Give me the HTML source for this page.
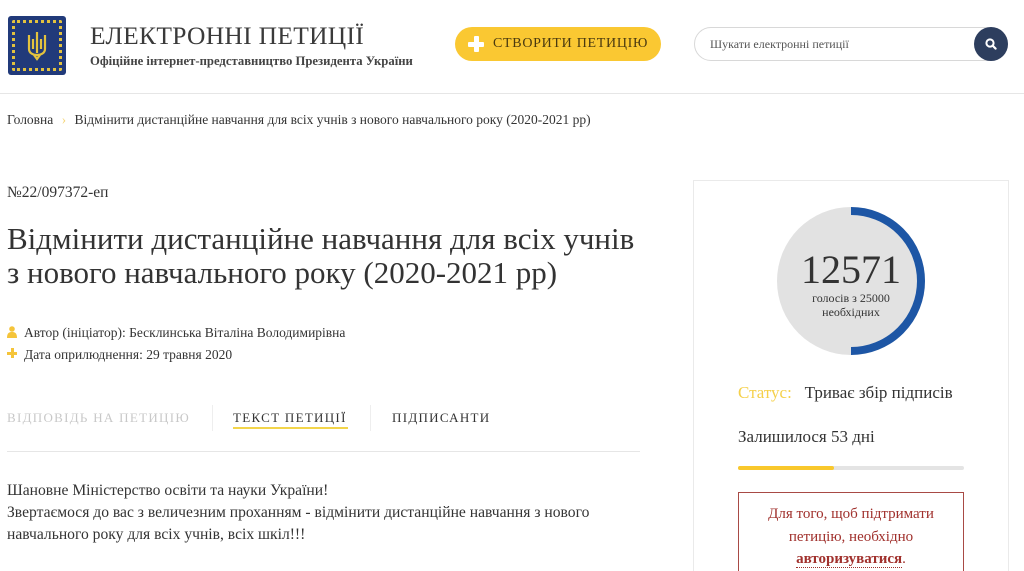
<!DOCTYPE html>
<html><head><meta charset="utf-8"><style>
*{margin:0;padding:0;box-sizing:border-box}
html,body{width:1024px;height:571px;overflow:hidden}
body{background:#fff;font-family:"Liberation Serif","DejaVu Serif",serif;color:#333;position:relative}
.a{position:absolute;white-space:nowrap}
</style></head><body>
<!-- logo -->
<div class="a" style="left:8px;top:16px;width:58px;height:59px;background:#213a7a;border-radius:3px"></div>
<div class="a" style="left:12px;top:20px;width:50px;height:51px;border:3px dotted #e3c23e;border-radius:2px"></div>
<svg class="a" style="left:25px;top:31px" width="24" height="30" viewBox="0 0 24 30"><path d="M12 1v21M4 4v14c0 4 4 6 8 6s8-2 8-6V4M8 8v10M16 8v10M9 24l3 4 3-4" stroke="#e3c23e" stroke-width="2.2" fill="none"/></svg>
<div class="a" style="left:90px;top:21px;font-size:25.5px;color:#3a3a3a;letter-spacing:0.3px">ЕЛЕКТРОННІ ПЕТИЦІЇ</div>
<div class="a" style="left:90px;top:54px;font-size:12.7px;font-weight:bold;color:#444">Офіційне інтернет-представництво Президента України</div>
<!-- button -->
<div class="a" style="left:455px;top:27px;width:206px;height:34px;border-radius:17px;background:#fac832"></div>
<div class="a" style="left:468px;top:36px;width:16px;height:16px">
<div class="a" style="left:6px;top:0;width:5px;height:16px;background:#fff;border-radius:1px"></div>
<div class="a" style="left:0;top:6px;width:16px;height:5px;background:#fff;border-radius:1px"></div></div>
<div class="a" style="left:493px;top:36px;font-size:14px;color:#4a3a10;letter-spacing:0.7px">СТВОРИТИ ПЕТИЦІЮ</div>
<!-- search -->
<div class="a" style="left:694px;top:27px;width:314px;height:34px;border:1px solid #d8d8d8;border-radius:17px"></div>
<div class="a" style="left:710px;top:37px;font-size:12px;color:#555">Шукати електронні петиції</div>
<div class="a" style="left:974px;top:27px;width:34px;height:34px;border-radius:50%;background:#2d3e5e"></div>
<svg class="a" style="left:984px;top:37px" width="14" height="14" viewBox="0 0 14 14"><circle cx="6" cy="6" r="3.6" stroke="#fff" stroke-width="2" fill="none"/><path d="M8.6 8.6l3 3" stroke="#fff" stroke-width="2.2" stroke-linecap="round"/></svg>
<div class="a" style="left:0;top:93px;width:1024px;height:1px;background:#e6e6e6"></div>
<!-- breadcrumb -->
<div class="a" style="left:7px;top:112px;font-size:13.5px;color:#333">Головна <span style="color:#f5d67a;margin:0 5px">›</span> Відмінити дистанційне навчання для всіх учнів з нового навчального року (2020-2021 рр)</div>
<div class="a" style="left:7px;top:184px;font-size:15.5px;color:#333">№22/097372-еп</div>
<div class="a" style="left:7px;top:222px;font-size:31px;line-height:34px;color:#333">Відмінити дистанційне навчання для всіх учнів<br>з нового навчального року (2020-2021 рр)</div>
<!-- meta -->
<svg class="a" style="left:7px;top:326px" width="10" height="12" viewBox="0 0 10 12"><circle cx="5" cy="3" r="2.8" fill="#f5c43a"/><path d="M0 12c0-5 2-6 5-6s5 1 5 6z" fill="#f5c43a"/></svg>
<div class="a" style="left:24px;top:325px;font-size:13.5px;color:#333">Автор (ініціатор): Бесклинська Віталіна Володимирівна</div>
<div class="a" style="left:7px;top:348px;width:10px;height:10px"><div class="a" style="left:4px;top:0;width:2.5px;height:10px;background:#f5c43a"></div><div class="a" style="left:0;top:4px;width:10px;height:2.5px;background:#f5c43a"></div></div>
<div class="a" style="left:24px;top:347px;font-size:13.5px;color:#333">Дата оприлюднення: 29 травня 2020</div>
<!-- tabs -->
<div class="a" style="left:7px;top:410px;font-size:13px;letter-spacing:1.3px;color:#c8c8c8">ВІДПОВІДЬ НА ПЕТИЦІЮ</div>
<div class="a" style="left:212px;top:405px;width:1px;height:26px;background:#eee"></div>
<div class="a" style="left:233px;top:410px;font-size:13px;letter-spacing:1.3px;color:#333">ТЕКСТ ПЕТИЦІЇ</div>
<div class="a" style="left:233px;top:427px;width:115px;height:2px;background:#f3d54a"></div>
<div class="a" style="left:370px;top:405px;width:1px;height:26px;background:#eee"></div>
<div class="a" style="left:392px;top:410px;font-size:13px;letter-spacing:1.3px;color:#333">ПІДПИСАНТИ</div>
<div class="a" style="left:7px;top:451px;width:633px;height:1px;background:#e6e6e6"></div>
<div class="a" style="left:7px;top:480px;font-size:15.6px;line-height:22px;color:#333">Шановне Міністерство освіти та науки України!<br>Звертаємося до вас з величезним проханням - відмінити дистанційне навчання з нового<br>навчального року для всіх учнів, всіх шкіл!!!</div>
<!-- sidebar -->
<div class="a" style="left:693px;top:180px;width:316px;height:400px;border:1px solid #eaeaea"></div>
<svg class="a" style="left:775px;top:205px" width="152" height="152" viewBox="0 0 152 152"><circle cx="76" cy="76" r="74" fill="#e2e2e2"/><path d="M76 6A70 70 0 0 1 76 146" stroke="#1d56a5" stroke-width="8" fill="none"/></svg>
<div class="a" style="left:776px;top:246px;width:150px;text-align:center;font-size:40px;color:#333">12571</div>
<div class="a" style="left:776px;top:291px;width:150px;text-align:center;font-size:12px;line-height:14px;color:#333">голосів з 25000<br>необхідних</div>
<div class="a" style="left:738px;top:383px;font-size:17px;color:#333"><span style="color:#f5d04a">Статус:</span>&nbsp;&nbsp; Триває збір підписів</div>
<div class="a" style="left:738px;top:427px;font-size:17px;color:#333">Залишилося 53 дні</div>
<div class="a" style="left:738px;top:466px;width:226px;height:4px;background:#e4e4e4;border-radius:2px"></div>
<div class="a" style="left:738px;top:466px;width:96px;height:4px;background:#f9c82c;border-radius:2px"></div>
<div class="a" style="left:738px;top:492px;width:226px;height:100px;border:1px solid #a84a45"></div>
<div class="a" style="left:738px;top:503px;width:226px;text-align:center;font-size:15px;line-height:22.5px;color:#a0302c">Для того, щоб підтримати<br>петицію, необхідно<br><b style="border-bottom:1px dotted #a0302c">авторизуватися</b>.</div>
</body></html>
